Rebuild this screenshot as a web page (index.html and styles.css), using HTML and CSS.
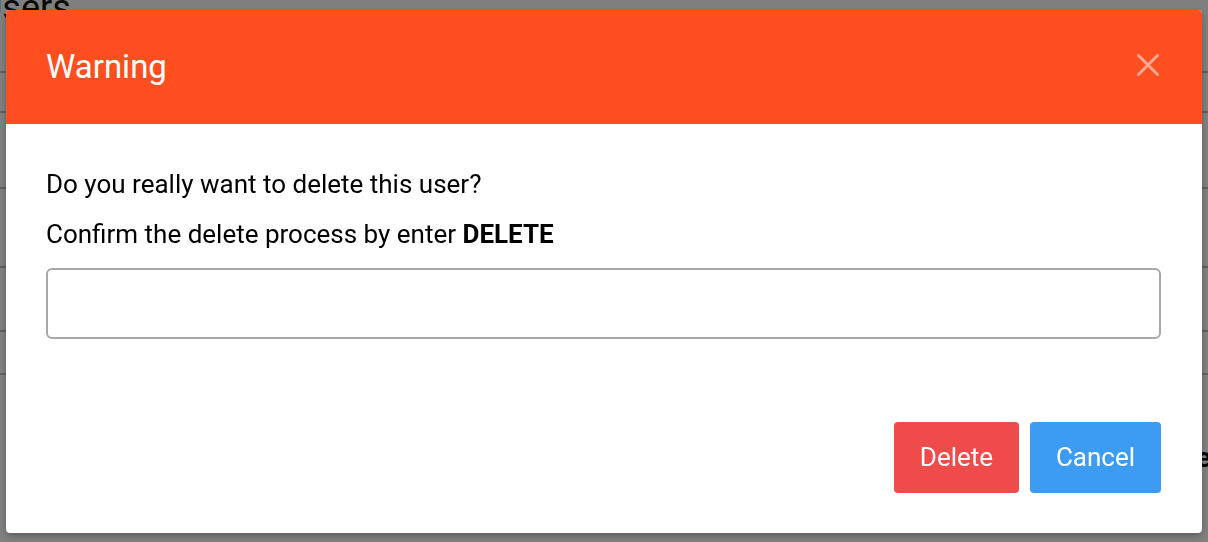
FILE: index.html
```html
<!DOCTYPE html>
<html lang="en">
<head>
<meta charset="utf-8">
<title>Warning</title>
<link rel="stylesheet" href="styles.css">
</head>
<body>
<div class="page">
  <h1 class="title">Users</h1>
  <div class="rows">
    <div class="row r1"></div>
    <div class="row r2"></div>
    <div class="row r3"></div>
    <div class="row r4"></div>
    <div class="row r5"></div>
    <div class="row r6"></div>
  </div>
  <span class="stray">e</span>
</div>
<div class="overlay"></div>
<div class="modal" role="dialog" aria-labelledby="modal-title">
  <div class="modal-header">
    <h2 class="modal-title" id="modal-title">Warning</h2>
    <button class="close" aria-label="Close">
      <svg width="22" height="22" viewBox="0 0 22 22"><path d="M1.5 1.5 L20.5 20.5 M20.5 1.5 L1.5 20.5" stroke="#fff" stroke-width="3" stroke-linecap="round" fill="none"/></svg>
    </button>
  </div>
  <div class="modal-body">
    <p class="msg">Do you really want to delete this user?</p>
    <p class="msg second">Confirm the delete process by enter <strong>DELETE</strong></p>
    <input class="confirm-input" type="text" aria-label="Confirm">
  </div>
  <div class="modal-footer">
    <button class="btn btn-delete">Delete</button>
    <button class="btn btn-cancel">Cancel</button>
  </div>
</div>
</body>
</html>
```
FILE: styles.css
```css
html, body {
  margin: 0;
  padding: 0;
  height: 100%;
  overflow: hidden;
}
body {
  font-family: Roboto, "Liberation Sans", Arial, sans-serif;
  background: #ffffff;
  color: #000;
}
.page {
  position: relative;
  height: 100%;
}
.title {
  margin: -11px 0 0 -21px;
  font-size: 36px;
  line-height: 38px;
  font-weight: 400;
  color: #111;
}
.row {
  border-bottom: 2px solid #c4c4c4;
}
.r1 { height: 44px; }
.r2 { height: 38px; }
.r3 { height: 74px; }
.r4 { height: 77px; }
.r5 { height: 62px; }
.r6 { height: 41px; }
.stray {
  position: absolute;
  left: 1196px;
  top: 452px;
  font-size: 28px;
  line-height: 34px;
  font-weight: 700;
  color: #000;
}
.overlay {
  position: fixed;
  inset: 0;
  background: rgba(0, 0, 0, 0.5);
}
.modal {
  position: fixed;
  left: 6px;
  top: 10px;
  width: 1196px;
  height: 523px;
  background: #fff;
  border-radius: 4px;
  overflow: hidden;
  box-shadow: 0 3px 6px rgba(0, 0, 0, 0.25);
  display: flex;
  flex-direction: column;
}
.modal-header {
  height: 114px;
  flex: none;
  background: #ff4f20;
  display: flex;
  align-items: center;
  justify-content: space-between;
  padding: 0 43px 0 40px;
}
.modal-title {
  margin: 0;
  font-size: 33px;
  font-weight: 400;
  color: #fff;
  line-height: 1;
  padding-bottom: 2px;
}
.close {
  border: 0;
  background: none;
  padding: 0;
  width: 22px;
  height: 22px;
  opacity: 0.5;
  display: flex;
  margin-bottom: 4px;
}
.modal-body {
  padding: 45px 41px 0 40px;
}
.msg {
  margin: 0;
  font-size: 26px;
  line-height: 30px;
  color: #000;
}
.msg.second {
  margin-top: 20px;
}
.msg strong {
  font-weight: 700;
}
.confirm-input {
  display: block;
  box-sizing: border-box;
  width: 100%;
  height: 71px;
  margin-top: 19px;
  border: 2px solid #a7a7a7;
  border-radius: 6px;
  background: #fff;
  font-size: 20px;
  padding: 0 14px;
  outline: none;
}
.modal-footer {
  margin-top: auto;
  padding: 0 41px 40px 40px;
  display: flex;
  justify-content: flex-end;
  gap: 11px;
}
.btn {
  height: 71px;
  border: 0;
  border-radius: 4px;
  color: #fff;
  font-family: Roboto, "Liberation Sans", Arial, sans-serif;
  font-size: 26px;
  line-height: 1;
  padding: 0 0 2px;
  cursor: pointer;
}
.btn-delete {
  background: #ef4b4b;
  width: 125px;
}
.btn-cancel {
  background: #3c9cf3;
  width: 131px;
}
```
